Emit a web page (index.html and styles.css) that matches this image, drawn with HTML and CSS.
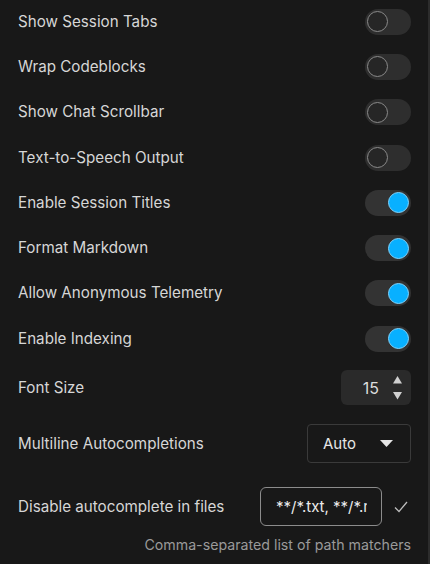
FILE: index.html
```html
<!DOCTYPE html>
<html>
<head>
<meta charset="utf-8">
<link rel="stylesheet" href="styles.css">
</head>
<body>
<div class="panel">
  <div class="row"><span class="label">Show Session Tabs</span><span class="toggle"><span class="knob"></span></span></div>
  <div class="row"><span class="label">Wrap Codeblocks</span><span class="toggle"><span class="knob"></span></span></div>
  <div class="row"><span class="label">Show Chat Scrollbar</span><span class="toggle"><span class="knob"></span></span></div>
  <div class="row"><span class="label">Text-to-Speech Output</span><span class="toggle"><span class="knob"></span></span></div>
  <div class="row"><span class="label">Enable Session Titles</span><span class="toggle on"><span class="knob"></span></span></div>
  <div class="row"><span class="label">Format Markdown</span><span class="toggle on"><span class="knob"></span></span></div>
  <div class="row"><span class="label">Allow Anonymous Telemetry</span><span class="toggle on"><span class="knob"></span></span></div>
  <div class="row"><span class="label">Enable Indexing</span><span class="toggle on"><span class="knob"></span></span></div>

  <div class="row row-num">
    <span class="label">Font Size</span>
    <span class="num">
      <span class="num-val">15</span>
      <span class="spin">
        <svg width="9" height="24" viewBox="0 0 9 24"><path d="M4.5 0 L9 7.5 L0 7.5 Z" fill="#d0d0d0"/><path d="M0 16 L9 16 L4.5 23.5 Z" fill="#d0d0d0"/></svg>
      </span>
    </span>
  </div>

  <div class="row row-select">
    <span class="label">Multiline Autocompletions</span>
    <span class="select"><span>Auto</span><svg width="13" height="7" viewBox="0 0 13 7"><path d="M0 0 L13 0 L6.5 7 Z" fill="#e6e6e6"/></svg></span>
  </div>

  <div class="row row-input">
    <span class="label">Disable autocomplete in files</span>
    <span class="input-wrap">
      <span class="input"><span class="input-text">**/*.txt, **/*.md</span></span>
      <svg class="check" width="14" height="12" viewBox="0 0 14 12"><path d="M1 6.5 L5 10.5 L13 1" fill="none" stroke="#bdbdbd" stroke-width="1.3"/></svg>
    </span>
  </div>
  <div class="help">Comma-separated list of path matchers</div>
</div>
</body>
</html>
```

FILE: styles.css
```css
html, body {
  margin: 0;
  padding: 0;
  background: #181818;
}
body {
  font-family: Inter, "Liberation Sans", Arial, sans-serif;
  color: #d6d6d6;
  font-size: 15px;
}
.panel {
  width: 430px;
  height: 564px;
  box-sizing: border-box;
  border-right: 2px solid #2c2c2c;
  padding: 0 17px 0 18px;
  display: flex;
  flex-direction: column;
}
.row {
  display: flex;
  align-items: center;
  justify-content: space-between;
  height: 45.3px;
  flex: none;
}
.row:first-child {
  margin-top: -1px;
}
.label {
  line-height: 18px;
  font-size: 15.2px;
}
.toggle {
  width: 46px;
  height: 26px;
  border-radius: 13px;
  background: #2e2e2e;
  display: flex;
  align-items: center;
  padding: 0 2px;
  box-sizing: border-box;
}
.knob {
  width: 21px;
  height: 21px;
  border-radius: 50%;
  box-sizing: border-box;
  border: 1px solid #8a8a8a;
  background: #262626;
}
.toggle.on {
  justify-content: flex-end;
  background: #333333;
}
.toggle.on .knob {
  background: #08b0ff;
  border-color: #7fd4ff;
}
.row-num {
  margin-top: 9px;
  height: 35px;
}
.num {
  width: 70px;
  height: 35px;
  background: #2a2a2a;
  border-radius: 6px;
  display: flex;
  align-items: center;
  justify-content: flex-end;
  box-sizing: border-box;
  padding-right: 9px;
  gap: 14px;
}
.num-val {
  color: #dcdcdc;
  font-size: 16px;
}
.spin {
  display: flex;
}
.row-select {
  margin-top: 19px;
  height: 39px;
}
.select {
  width: 104px;
  height: 39px;
  box-sizing: border-box;
  border: 1px solid #3a3a3a;
  border-radius: 4px;
  display: flex;
  align-items: center;
  justify-content: space-between;
  padding: 0 17px 0 15px;
  color: #e6e6e6;
  font-size: 15px;
}
.row-input {
  margin-top: 24px;
  height: 39px;
}
.input-wrap {
  display: flex;
  align-items: center;
  gap: 12px;
}
.input {
  width: 122px;
  height: 39px;
  box-sizing: border-box;
  border: 1px solid #8c8c8c;
  border-radius: 6px;
  padding: 0 14px 0 15px;
  display: flex;
  align-items: center;
  color: #ececec;
  font-size: 15px;
}
.input-text {
  display: block;
  overflow: hidden;
  white-space: nowrap;
  width: 100%;
}
.check {
  margin-right: 3px;
}
.help {
  margin-top: 9px;
  text-align: right;
  color: #9a9a9a;
  font-size: 14.2px;
  line-height: 20px;
}
```
